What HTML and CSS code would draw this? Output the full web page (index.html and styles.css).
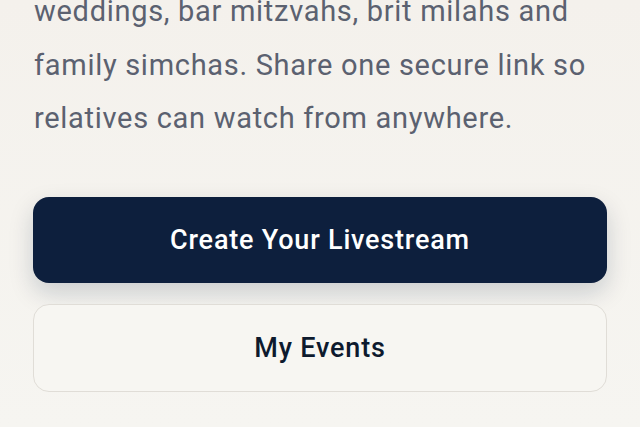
FILE: index.html
```html
<!DOCTYPE html>
<html lang="en">
<head>
    <meta charset="UTF-8">
    <meta name="viewport" content="width=device-width, initial-scale=1.0">
    <title>Simcha Live</title>
    <link rel="stylesheet" href="styles.css">
</head>
<body>
    <main class="hero">
        <p class="lead">weddings, bar mitzvahs, brit milahs and<br>family simchas. Share one secure link so<br>relatives can watch from anywhere.</p>
        <div class="actions">
            <a class="btn btn-primary" href="#create">Create Your Livestream</a>
            <a class="btn btn-outline" href="#events">My Events</a>
        </div>
    </main>
</body>
</html>
```

FILE: styles.css
```css
body {
    margin: 0;
    font-family: Roboto, Inter, sans-serif;
    background: linear-gradient(180deg, #f4f1ec 0%, #f6f5f1 100%);
    height: 427px;
    overflow: hidden;
}
.hero {
    padding: 0 33px;
}
.lead {
    margin: -15px 0 0;
    padding-left: 1px;
    font-size: 29px;
    line-height: 53.5px;
    letter-spacing: 0.7px;
    color: #5b6170;
    white-space: nowrap;
}
.actions {
    display: flex;
    flex-direction: column;
    gap: 21px;
    margin-top: 51px;
}
.btn {
    display: flex;
    align-items: center;
    justify-content: center;
    border-radius: 16px;
    font-size: 27px;
    font-weight: 500;
    letter-spacing: 0.8px;
    text-decoration: none;
}
.btn-primary {
    height: 86px;
    background: #0d1f3d;
    color: #ffffff;
    box-shadow: 0 10px 24px rgba(13, 31, 61, 0.18);
}
.btn-outline {
    height: 86px;
    border: 1.5px solid #e0ddd7;
    background: #f7f6f2;
    color: #0d1a2e;
}
```
